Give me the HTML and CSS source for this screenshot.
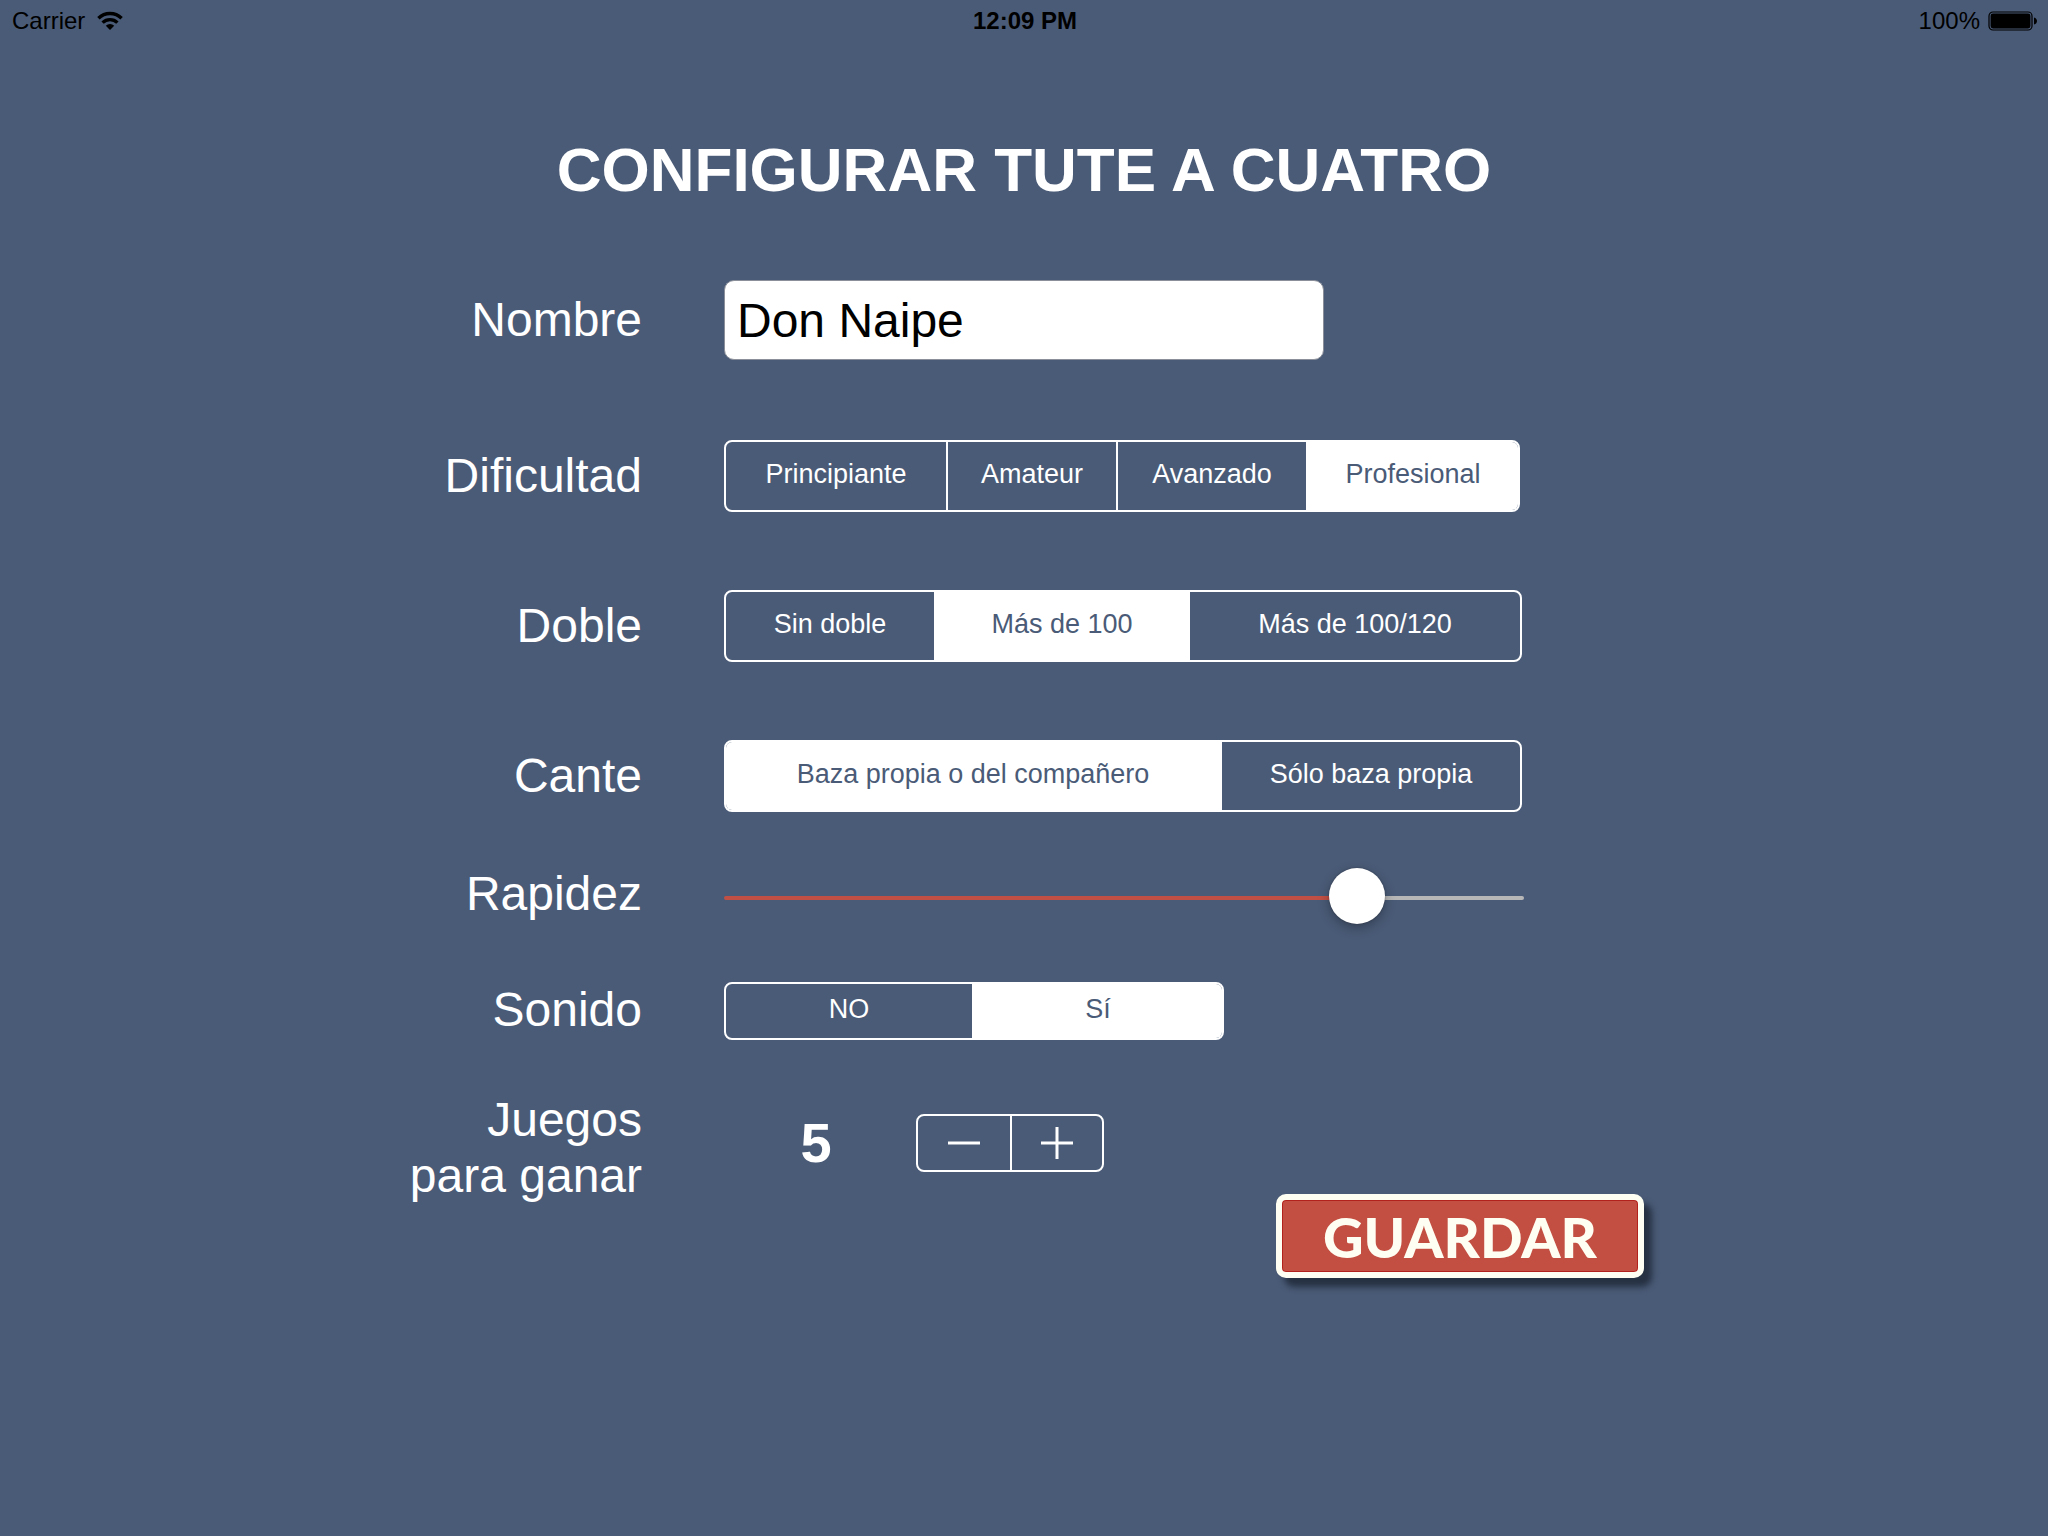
FILE: index.html
```html
<!DOCTYPE html>
<html lang="es">
<head>
  <meta charset="utf-8">
  <meta name="viewport" content="width=device-width, initial-scale=1">
  <title>Configurar Tute a Cuatro</title>
  <link rel="stylesheet" href="styles.css">
</head>
<body>
  <header class="status-bar">
    <div class="status-left">
      <span>Carrier</span>
      <svg class="wifi" viewBox="0 0 26 20" aria-hidden="true">
        <g fill="none" stroke="#000" stroke-width="3.4">
          <path d="M1.4 7.2A16.6 16.6 0 0 1 24.6 7.2"/>
          <path d="M5.6 11.6A10.6 10.6 0 0 1 20.4 11.6"/>
        </g>
        <path d="M13 19L8.8 14.8A6 6 0 0 1 17.2 14.8Z"/>
      </svg>
    </div>
    <time class="status-time">12:09 PM</time>
    <div class="status-right">
      <span>100%</span>
      <svg class="battery" viewBox="0 0 50 20" aria-hidden="true">
        <rect x="1" y="1" width="43" height="18" rx="4" fill="none" stroke="#000" stroke-width="1.2"/>
        <rect x="2.6" y="2.6" width="39.8" height="14.8" rx="2.4"/>
        <path d="M46 6.5C50 7.5 50 12.5 46 13.5Z"/>
      </svg>
    </div>
  </header>

  <main class="settings">
    <h1 class="title">CONFIGURAR TUTE A CUATRO</h1>

    <form class="form">
      <div class="row row-name">
        <label class="row-label" for="nombre">Nombre</label>
        <input class="text-field" id="nombre" type="text" value="Don Naipe">
      </div>

      <div class="row row-level" role="radiogroup" aria-labelledby="l-dificultad">
        <span class="row-label" id="l-dificultad">Dificultad</span>
        <div class="segmented seg-level">
          <label class="segment"><input type="radio" name="dificultad"><span>Principiante</span></label>
          <label class="segment"><input type="radio" name="dificultad"><span>Amateur</span></label>
          <label class="segment"><input type="radio" name="dificultad"><span>Avanzado</span></label>
          <label class="segment"><input type="radio" name="dificultad" checked><span>Profesional</span></label>
        </div>
      </div>

      <div class="row row-double" role="radiogroup" aria-labelledby="l-doble">
        <span class="row-label" id="l-doble">Doble</span>
        <div class="segmented seg-double">
          <label class="segment"><input type="radio" name="doble"><span>Sin doble</span></label>
          <label class="segment"><input type="radio" name="doble" checked><span>Más de 100</span></label>
          <label class="segment"><input type="radio" name="doble"><span>Más de 100/120</span></label>
        </div>
      </div>

      <div class="row row-call" role="radiogroup" aria-labelledby="l-cante">
        <span class="row-label" id="l-cante">Cante</span>
        <div class="segmented seg-call">
          <label class="segment"><input type="radio" name="cante" checked><span>Baza propia o del compañero</span></label>
          <label class="segment"><input type="radio" name="cante"><span>Sólo baza propia</span></label>
        </div>
      </div>

      <div class="row row-top row-speed">
        <label class="row-label" for="rapidez">Rapidez</label>
        <input class="slider" id="rapidez" type="range" min="0" max="16" value="13" style="--fill: 79%">
      </div>

      <div class="row row-top row-sound" role="radiogroup" aria-labelledby="l-sonido">
        <span class="row-label" id="l-sonido">Sonido</span>
        <div class="segmented seg-sound">
          <label class="segment"><input type="radio" name="sonido"><span>NO</span></label>
          <label class="segment"><input type="radio" name="sonido" checked><span>Sí</span></label>
        </div>
      </div>

      <div class="row row-top row-games">
        <label class="row-label" for="juegos">Juegos<br>para ganar</label>
        <div class="games">
          <div class="games-controls">
            <output class="games-count" id="juegos">5</output>
            <div class="stepper">
              <button class="step" type="button" aria-label="Menos">
                <svg viewBox="0 0 32 32" aria-hidden="true"><path d="M0 16H32"/></svg>
              </button>
              <button class="step" type="button" aria-label="Más">
                <svg viewBox="0 0 32 32" aria-hidden="true"><path d="M0 16H32M16 0V32"/></svg>
              </button>
            </div>
          </div>
          <button class="save" type="submit">GUARDAR</button>
        </div>
      </div>
    </form>
  </main>
</body>
</html>
```
FILE: styles.css
```css
:root {
  --slate: #4a5b77;
  --red: #c24f44;
  --ivory: #fffef2;
}

* {
  box-sizing: border-box;
}

body {
  margin: 0;
  min-height: 100vh;
  background: var(--slate);
  color: #fff;
  font-family: "Liberation Sans", Arial, sans-serif;
}

/* Status bar */

.status-bar {
  display: grid;
  grid-template-columns: 1fr auto 1fr;
  align-items: center;
  height: 42px;
  padding: 0 10px 0 12px;
  color: #000;
  font-size: 24px;
  line-height: 42px;
}

.status-left,
.status-right {
  display: flex;
  align-items: center;
  gap: 12px;
}

.status-right {
  justify-content: flex-end;
  gap: 8px;
}

.status-time {
  font-weight: 700;
}

.wifi {
  width: 26px;
  height: 20px;
}

.battery {
  width: 50px;
  height: 20px;
}

/* Page */

.settings {
  width: 100%;
  max-width: 1240px;
  margin: 0 auto;
  padding-top: 92px;
}

.title {
  margin: 0;
  font-size: 62px;
  line-height: 72px;
  font-weight: 700;
  text-align: center;
}

.form {
  padding-top: 74px;
}

.row {
  display: grid;
  grid-template-columns: 238px minmax(0, 1fr);
  column-gap: 82px;
  align-items: center;
}

.row-top {
  align-items: start;
}

.row-level {
  margin-top: 80px;
}

.row-double,
.row-call {
  margin-top: 78px;
}

.row-speed {
  margin-top: 54px;
}

.row-sound {
  margin-top: 52px;
}

.row-games {
  margin-top: 52px;
}

.row-label {
  font-size: 48px;
  line-height: 56px;
  text-align: right;
}

.text-field {
  width: 100%;
  max-width: 600px;
  height: 80px;
  padding: 0 12px;
  border: 1px solid #8b8f99;
  border-radius: 10px;
  background: #fff;
  color: #000;
  font-family: inherit;
  font-size: 48px;
}

/* Segmented controls */

.segmented {
  display: grid;
  width: 100%;
  max-width: 798px;
  height: 72px;
  border: 2px solid #fff;
  border-radius: 8px;
  overflow: hidden;
}

.seg-level {
  max-width: 796px;
  grid-template-columns: 220fr 170fr 190fr 212fr;
}

.seg-double {
  grid-template-columns: 208fr 254fr 332fr;
}

.seg-call {
  grid-template-columns: 494fr 300fr;
}

.seg-sound {
  max-width: 500px;
  height: 58px;
  grid-template-columns: 246fr 250fr;
}

.segment {
  display: grid;
  position: relative;
  font-size: 27px;
  cursor: pointer;
}

.segment + .segment {
  border-left: 2px solid #fff;
}

.segment input {
  position: absolute;
  inset: 0;
  margin: 0;
  opacity: 0;
}

.segment span {
  display: flex;
  align-items: center;
  justify-content: center;
  padding-bottom: 4px;
}

.segment input:checked + span {
  background: #fff;
  color: var(--slate);
}

/* Slider */

.slider {
  width: 100%;
  max-width: 800px;
  height: 64px;
  margin: 0;
  appearance: none;
  background: transparent;
}

.slider::-webkit-slider-runnable-track {
  height: 4px;
  border-radius: 2px;
  background: linear-gradient(to right, var(--red) var(--fill), #b7b7b7 var(--fill));
}

.slider::-webkit-slider-thumb {
  appearance: none;
  width: 56px;
  height: 56px;
  margin-top: -28px;
  border-radius: 50%;
  background: #fff;
  box-shadow: 0 4px 12px rgba(0, 0, 0, 0.3), 0 0 2px rgba(0, 0, 0, 0.3);
}

/* Games to win */

.games {
  display: flex;
  flex-direction: column;
  gap: 22px;
  padding-top: 22px;
}

.games-controls {
  display: flex;
  align-items: center;
  gap: 8px;
}

.games-count {
  width: 184px;
  font-size: 56px;
  line-height: 58px;
  font-weight: 700;
  text-align: center;
}

.stepper {
  display: grid;
  grid-template-columns: 1fr 1fr;
  width: 188px;
  height: 58px;
  border: 2px solid #fff;
  border-radius: 8px;
}

.step {
  display: flex;
  align-items: center;
  justify-content: center;
  padding: 0;
  border: 0;
  background: transparent;
}

.step + .step {
  border-left: 2px solid #fff;
}

.step svg {
  width: 32px;
  height: 32px;
  fill: none;
  stroke: #fff;
  stroke-width: 3;
}

.save {
  align-self: flex-end;
  width: 368px;
  height: 84px;
  padding: 2px 0 0;
  border: 6px solid var(--ivory);
  border-radius: 10px;
  background: #c34e42;
  box-shadow: 8px 9px 6px #263142, inset 0 0 0 1px #b3211c;
  color: var(--ivory);
  font-family: Lato, "Open Sans", sans-serif;
  font-size: 56px;
  font-weight: 900;
  line-height: 64px;
}
```
